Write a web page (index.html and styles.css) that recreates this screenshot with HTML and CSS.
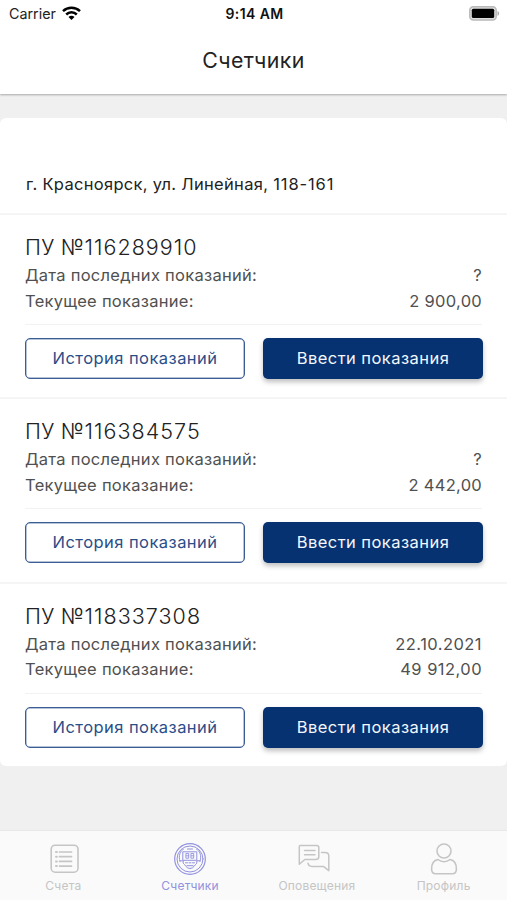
FILE: index.html
```html
<!DOCTYPE html>
<html lang="ru">
<head>
<meta charset="utf-8">
<title>Счетчики</title>
<link rel="stylesheet" href="styles.css">
</head>
<body>
<div class="app">
  <header class="header">
    <div class="status">
      <div class="carrier"><span>Carrier</span>
        <svg width="19" height="14" viewBox="0 0 19 14"><g fill="none" stroke="#000" stroke-width="2.5"><path d="M1 5.2C5.8.7 13.200.7 18 5.200"/><path d="M4.200 8.500c3-2.900 7.600-2.900 10.600 0"/></g><path d="M6.500 10.900c1.700-1.600 4.300-1.600 6 0l-3 3z"/></svg>
      </div>
      <time class="clock">9:14 AM</time>
      <svg class="battery" width="31" height="15" viewBox="0 0 31 15"><rect x=".8" y=".8" width="26.400" height="13.200" rx="3.500" fill="#ddd" stroke="#b9b9b9" stroke-width="1.500"/><rect x="2.800" y="2.800" width="22.400" height="9.200" rx="1.500"/><path d="M28.500 5c2.200.8 2.200 4 0 4.800z" fill="#aaa"/></svg>
    </div>
    <h1 class="title"><span>Счетчики</span></h1>
  </header>
  <main class="content">
    <section class="card">
      <div class="address"><span>г. Красноярск, ул. Линейная, <span class="house">118-161</span></span></div>
      <article class="meter">
        <h2>ПУ №<span class="number">116289910</span></h2>
        <div class="row"><span>Дата последних показаний:</span><span class="value">?</span></div>
        <div class="row"><span>Текущее показание:</span><span class="value">2 900,00</span></div>
        <div class="actions"><button class="btn outline"><span>История показаний</span></button><button class="btn solid"><span>Ввести показания</span></button></div>
      </article>
      <article class="meter">
        <h2>ПУ №<span class="number">116384575</span></h2>
        <div class="row"><span>Дата последних показаний:</span><span class="value">?</span></div>
        <div class="row"><span>Текущее показание:</span><span class="value">2 442,00</span></div>
        <div class="actions"><button class="btn outline"><span>История показаний</span></button><button class="btn solid"><span>Ввести показания</span></button></div>
      </article>
      <article class="meter">
        <h2>ПУ №<span class="number">118337308</span></h2>
        <div class="row"><span>Дата последних показаний:</span><span class="value wide">22.10.2021</span></div>
        <div class="row"><span>Текущее показание:</span><span class="value wide">49 912,00</span></div>
        <div class="actions"><button class="btn outline"><span>История показаний</span></button><button class="btn solid"><span>Ввести показания</span></button></div>
      </article>
    </section>
  </main>
  <nav class="tabs">
    <a class="tab">
      <svg width="34" height="34" viewBox="-1.500 0 34 34"><rect x="3.700" y="3.200" width="26.800" height="27" rx="4" stroke-width="1.600"/><path d="M12 10h12M12 14.700h12M12 19.400h12M12 24.100h12" stroke-width="1.700"/><path d="M8.500 10h.8M8.500 14.700h.8M8.500 19.400h.8M8.500 24.100h.8" stroke-width="2"/></svg>
      <span>Счета</span>
    </a>
    <a class="tab active">
      <svg width="34" height="34" viewBox="0 0 34 34"><circle cx="17" cy="17" r="15.300" stroke-width="1.200"/><circle cx="17" cy="17" r="13" stroke-width="1"/><path d="M10.200 9.800h13.600v8.500H10.200zM7 19.500c-2-6 .5-11 3.200-12M27 19.500c2-6-.5-11-3.200-12M7 18.800h3.200v2.400c2.200 1.600 3 5.300 6.800 5.300s4.600-3.700 6.800-5.300v-2.400H27M14.500 7h5M12.500 20.800h2m1.500 0h2m1.500 0h2M14 23.700h6" stroke-width="1"/><path d="M13.300 11.500h2.400v4.700h-2.400zm5 0h2.400v4.700h-2.400zM13.300 13.800h2.400m2.600 0h2.400" stroke-width=".9"/></svg>
      <span>Счетчики</span>
    </a>
    <a class="tab">
      <svg width="40" height="34" viewBox="1 0 40 34"><path d="M4.300 3.500h16.500q2 0 2 2v9q0 3-3 3H8.800l-5.500 4.700V4.500q0-1 1-1zM8.500 8.500H19M8.500 12.800H19M25.500 10.500h3.500q3.800 0 3.800 3.500v14.700l-5.400-4.300H16q-3.500 0-4-3.200" stroke-width="1.500"/></svg>
      <span>Оповещения</span>
    </a>
    <a class="tab">
      <svg width="34" height="34" viewBox="0 0 34 34"><circle cx="17" cy="9" r="7" stroke-width="1.600"/><path d="M11 17.500c3.500 3 8.500 3 12 0 4.500.8 6.400 4.300 6.400 9.500 0 3-1.300 4.800-4.200 4.800H8.800C5.900 31.800 4.600 30 4.600 27c0-5.200 1.900-8.700 6.400-9.500z" stroke-width="1.600"/></svg>
      <span>Профиль</span>
    </a>
  </nav>
</div>
</body>
</html>
```
FILE: styles.css
```css
* { box-sizing: border-box; }
body { margin: 0; font-family: Inter, "Liberation Sans", sans-serif; background: #f0f0f0; color: #222; }
.app { height: 900px; display: flex; flex-direction: column; overflow: hidden; }
.header { height: 94px; background: #fff; box-shadow: 0 1px 2px rgba(0,0,0,.3); flex: none; }
.status { height: 27px; padding: 0 7px 0 9px; display: grid; grid-template-columns: 1fr auto 1fr; align-items: center; font-size: 14.300px; }
.carrier { display: flex; align-items: center; gap: 6px; color: #222; }
.carrier svg { margin-top: -2px; }
.clock { font-weight: 600; font-size: 14px; letter-spacing: .4px; color: #111; }
.battery { justify-self: end; margin-top: -1px; }
.title { margin: 0; height: 65px; display: flex; align-items: center; justify-content: center; font-size: 21.300px; font-weight: 400; letter-spacing: .4px; }
.content { flex: 1; padding-top: 24px; }
.card { height: 648px; background: #fff; border-radius: 6px; display: flex; flex-direction: column; }
.address { flex: none; height: 95px; padding: 54px 25px 0 26px; font-size: 16.500px; line-height: 25px; letter-spacing: .3px; }
.house { letter-spacing: .9px; }
.meter { flex: 1; border-top: 2px solid #f5f5f5; padding: 19px 25px 0; }
.meter h2 { margin: 0 0 2px; font-size: 21.500px; line-height: 27px; font-weight: 300; letter-spacing: .25px; }
.number { letter-spacing: 1.050px; }
.row { display: flex; justify-content: space-between; font-size: 16.500px; line-height: 25.500px; color: #505050; font-weight: 400; letter-spacing: .27px; }
.value { text-align: right; }
.wide { letter-spacing: .45px; }
.actions { display: flex; gap: 18px; border-top: 1px solid #f2f2f2; margin-top: 10px; padding-top: 13px; }
.btn { flex: 0 0 220px; height: 41px; border-radius: 5px; font: 400 16.500px Inter, sans-serif; letter-spacing: .45px; padding: 0 0 1px; }
.outline { border: 1px solid #3b5d94; box-shadow: inset 0 0 0 .5px #6f89b2; background: #fff; color: #2b4d88; }
.solid { border: 0; background: #063272; color: #f4f7fb; box-shadow: 0 3px 5px rgba(0,0,0,.25); }
.tabs { flex: none; height: 69px; background: #fafafa; box-shadow: 0 -1px 1px #e9e9e9; display: grid; grid-template-columns: repeat(4, 1fr); }
.tab { display: flex; flex-direction: column; align-items: center; padding-top: 11px; color: #c5c5c5; font-size: 12px; line-height: 20px; letter-spacing: .2px; }
.tab svg { flex: none; fill: none; stroke: currentColor; stroke-linecap: round; stroke-linejoin: round; }
.active { color: #9292df; }
```
